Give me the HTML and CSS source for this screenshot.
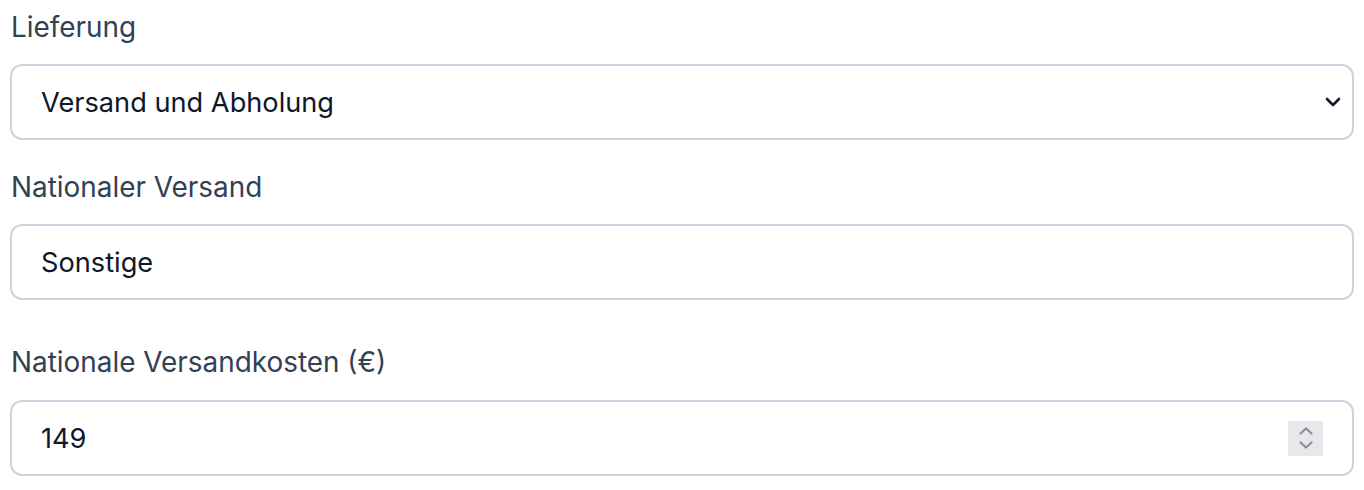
FILE: index.html
```html
<!DOCTYPE html>
<html lang="de">
<head>
<meta charset="utf-8">
<title>Lieferung</title>
<link rel="stylesheet" href="styles.css">
</head>
<body>
<form class="form">
  <div class="field">
    <label class="label">Lieferung</label>
    <div class="control">
      <span class="value">Versand und Abholung</span>
      <svg class="chev" width="16" height="10" viewBox="0 0 16 10"><path d="M2 2l6 6 6-6" fill="none" stroke="#0f172a" stroke-width="2.6" stroke-linecap="round" stroke-linejoin="round"/></svg>
    </div>
  </div>
  <div class="field">
    <label class="label">Nationaler Versand</label>
    <div class="control">
      <span class="value">Sonstige</span>
    </div>
  </div>
  <div class="field field-spaced">
    <label class="label">Nationale Versandkosten (€)</label>
    <div class="control">
      <span class="value">149</span>
      <span class="spin">
        <svg width="16" height="28" viewBox="0 0 16 28"><path d="M2.5 9.5l5.5-5 5.5 5M2.5 18.5l5.5 5 5.5-5" fill="none" stroke="#8a8f9a" stroke-width="2.2" stroke-linecap="round" stroke-linejoin="round"/></svg>
      </span>
    </div>
  </div>
</form>
</body>
</html>
```
FILE: styles.css
```css
html, body {
  margin: 0;
  padding: 0;
  background: #ffffff;
}
body {
  font-family: Inter, "Noto Sans", sans-serif;
}
.form {
  display: flex;
  flex-direction: column;
  padding: 7px 10px 0 10px;
}
.field {
  display: flex;
  flex-direction: column;
  gap: 17px;
  margin-bottom: 27px;
}
.field-spaced {
  margin-top: 15px;
  gap: 18px;
}
.label {
  font-size: 27.9px;
  line-height: 40px;
  color: #334155;
  font-weight: 400;
  height: 40px;
  padding-left: 1px;
}
.control {
  box-sizing: border-box;
  height: 76px;
  border: 2px solid #cbd5e1;
  border-radius: 12px;
  display: flex;
  align-items: center;
  justify-content: space-between;
  padding: 0 11px 0 29px;
}
.value {
  font-size: 27.2px;
  color: #0f172a;
}
.chev {
  display: block;
}
.spin {
  width: 35px;
  height: 35px;
  background: #e8e8ec;
  display: flex;
  align-items: center;
  justify-content: center;
  margin-right: 18px;
}
.spin svg {
  display: block;
}
```
